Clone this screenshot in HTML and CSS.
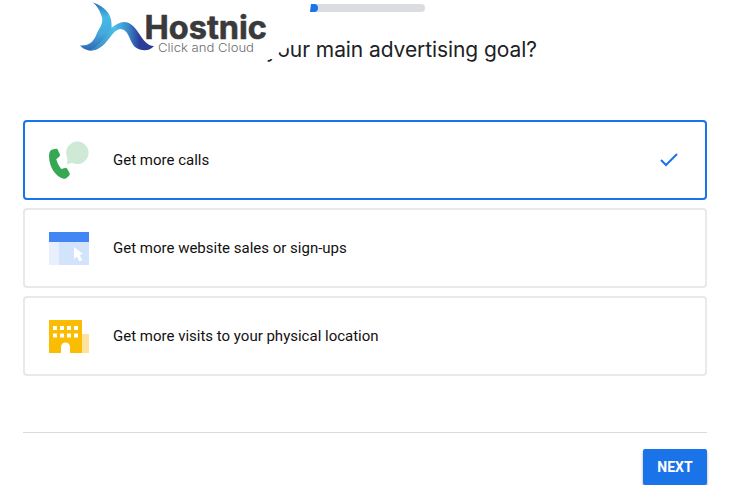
FILE: index.html
```
<!doctype html>
<html lang="en">
<head>
<meta charset="utf-8">
<title>Main advertising goal</title>
<link rel="stylesheet" href="styles.css">
</head>
<body>
<div class="page">
    <div class="progress"><div class="bar"></div></div>
    <h1 class="title">your main advertising goal?</h1>
    <svg class="logo" width="310" height="68" viewBox="0 0 310 68">
        <defs>
            <linearGradient id="tail" x1="0" y1="0" x2="0" y2="1">
                <stop offset="0" stop-color="#2c6fb5"/>
                <stop offset=".3" stop-color="#46b9e6"/>
                <stop offset=".65" stop-color="#45a9dc"/>
                <stop offset="1" stop-color="#2f66b4"/>
            </linearGradient>
            <linearGradient id="wave" x1="0" y1="0" x2="1" y2="0">
                <stop offset="0" stop-color="#3474bb"/>
                <stop offset=".4" stop-color="#4bc0e8"/>
                <stop offset=".6" stop-color="#3d8ccb"/>
                <stop offset=".78" stop-color="#2a3f9b"/>
                <stop offset="1" stop-color="#2d3b90"/>
            </linearGradient>
        </defs>
        <path class="plate" d="M0 0H310V30L290 42Q289 51 279 52.500L275 59H0Z"/>
        <path fill="url(#tail)" d="M93 2.500C104 6 112 14 111.500 24.500L112 34C105 45 98 51 90 50.500Q84 50 80 45.500C90 46 94 41 97 33C100 27 104 23 101.500 16C99.500 10 97 6 93 2.500Z"/>
        <path fill="url(#wave)" d="M88 50.500C104 47 106 24 124 22C138 22 141 46 154 46C150 51 142 52 135 47C129 41 129 29 120 29C111 30 105 52 88 50.500Z"/>
        <text class="name" x="144.500" y="39" textLength="122.500" lengthAdjust="spacingAndGlyphs">Hostnic</text>
        <text class="slogan" x="158" y="52" textLength="96" lengthAdjust="spacingAndGlyphs">Click and Cloud</text>
    </svg>
    <ul class="goals">
        <li class="goal active">
            <svg class="icon" width="40" height="40" viewBox="0 0 40 40">
                <path fill="#ceead6" d="M28.500 1.500A11.300 11.300 0 1 1 23 22.800L18 24.500L18.400 18A11.300 11.300 0 0 1 28.500 1.500Z"/>
                <path fill="#34a853" d="M3.500 9.500L6.800 8.700Q8.300 8.400 8.900 9.900L10.900 14.300Q11.400 15.700 10.200 16.700L7.200 19.200Q8.600 24.800 12.200 28.900L16 27.900Q17.500 27.600 18.300 28.900L20.500 33Q21.200 34.500 20 35.800L17.600 38Q16.400 39.100 14.500 38.700C5.500 36.500-1 24 .2 14Q.7 10.300 3.500 9.500Z"/>
            </svg>
            <span class="label">Get more calls</span>
            <svg class="check" width="20" height="16" viewBox="0 0 20 16">
                <path d="M2 8L7 13L18 2"/>
            </svg>
        </li>
        <li class="goal">
            <svg class="icon" width="40" height="40" viewBox="0 0 40 40">
                <path fill="#e8f0fe" d="M0 14h10v23H0z"/>
                <path fill="#d2e3fc" d="M10 14h30v23H10z"/>
                <path fill="#4285f4" d="M0 4h40v10H0z"/>
                <path fill="#fff" d="M25 19L34 26L30.500 27L33.300 32L30.500 33.500L28 28.500L25 31Z"/>
            </svg>
            <span class="label">Get more website sales or sign-ups</span>
        </li>
        <li class="goal">
            <svg class="icon" width="40" height="40" viewBox="0 0 40 40">
                <path fill="#fee3a0" d="M33 18h7v19h-7z"/>
                <path fill="#fbbc04" d="M0 4h33v33H0z"/>
                <path fill="#fff" d="M4 10h4v4H4zM11 10h4v4h-4zM18 10h4v4h-4zM25 10h4v4h-4zM4 17.500h4v4H4zM11 17.500h4v4h-4zM18 17.500h4v4h-4zM25 17.500h4v4h-4zM12 37V31A4.500 4.500 0 0 1 21 31V37z"/>
            </svg>
            <span class="label">Get more visits to your physical location</span>
        </li>
    </ul>
    <div class="footer">
        <button class="next">NEXT</button>
    </div>
</div>
</body>
</html>
```

FILE: styles.css
```
*{
    box-sizing:border-box;
}
body{
    margin:0;
    background:#fff;
    font-family:Roboto, "Liberation Sans", sans-serif;
}
ul{
    margin:0;
    padding:0;
}
li{
    list-style:none;
}
.page{
    position:relative;
    padding:4px 22px 0 23px;
}
.progress{
    width:115px;
    height:8px;
    margin-left:287px;
    background:#dadce0;
    border-radius:0 4px 4px 0;
    overflow:hidden;
    clip-path:polygon(1px 0, 100% 0, 100% 100%, 0 100%);
}
.bar{
    width:8px;
    height:8px;
    background:#1a73e8;
    border-radius:0 4px 4px 0;
}
.title{
    margin:23px 0 0 243px;
    height:30px;
    font:400 21px/30px Inter, sans-serif;
    letter-spacing:-.08px;
    color:#202124;
    white-space:nowrap;
}
/* logo sits over the heading */
.logo{
    position:absolute;
    left:0;
    top:0;
}
.plate{
    fill:#fff;
}
.name{
    font:700 33px Inter, sans-serif;
    fill:#3a3a3c;
    stroke:#3a3a3c;
    stroke-width:.6;
    stroke-linejoin:round;
}
.slogan{
    font:300 12px Inter, sans-serif;
    fill:#6b6b6d;
}
.goals{
    display:flex;
    flex-direction:column;
    gap:8px;
    margin-top:55px;
}
.goal{
    display:flex;
    align-items:center;
    height:80px;
    padding:0 26px 0 24px;
    border:2px solid #e8e8ed;
    border-radius:4px;
}
.active{
    border-color:#1a73e8;
}
.label{
    flex:1;
    margin-left:24px;
    font-size:15px;
    color:#111;
}
.check path{
    fill:none;
    stroke:#1a73e8;
    stroke-width:2;
}
.footer{
    display:flex;
    justify-content:flex-end;
    margin-top:56px;
    padding-top:16px;
    border-top:1px solid #dadce0;
}
.next{
    width:64px;
    height:36px;
    padding:0;
    border:0;
    border-radius:2px;
    background:#1a73e8;
    color:#fff;
    font:700 14px Roboto, sans-serif;
    box-shadow:0 2px 3px rgba(0,0,0,.35);
}
```
